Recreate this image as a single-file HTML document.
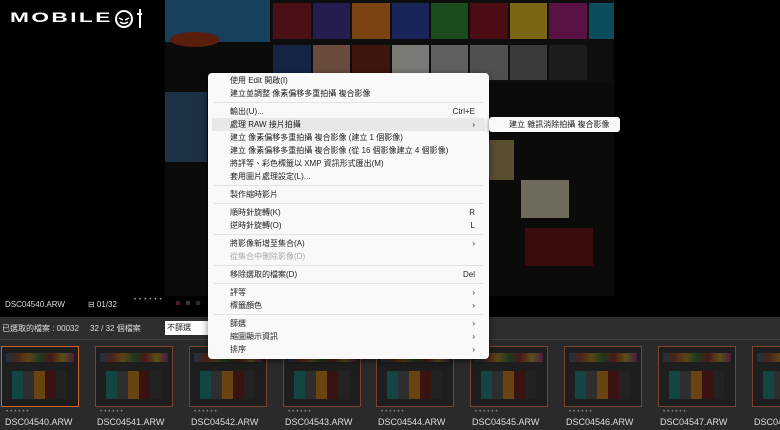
<!DOCTYPE html>
<html><head><meta charset="utf-8"><style>
*{margin:0;padding:0;box-sizing:border-box}
html,body{width:780px;height:430px;overflow:hidden}
body{background:#000;position:relative;font-family:"Liberation Sans","Noto Sans CJK TC",sans-serif;color:#ddd}
#w{position:absolute;left:0;top:0;width:780px;height:430px;overflow:hidden}
.a{position:absolute}
.menu{position:absolute;left:208px;top:73px;width:281px;height:286px;background:#f9f9f9;border-radius:4px;box-shadow:0 2px 8px rgba(0,0,0,.5);font-size:8px;color:#222}
.it{position:absolute;left:22px;height:13px;line-height:13px;white-space:nowrap}
.k{position:absolute;right:14px;height:13px;line-height:13px}
.sep{position:absolute;left:6px;right:6px;height:1px;background:#e2e2e2}
.th{position:absolute;top:346px;width:78px;height:61px;border:1px solid #7a4430;background:#1e1e1e;overflow:hidden}
.lab{position:absolute;top:417px;font-size:9px;color:#ddd;white-space:nowrap}
.dots{position:absolute;top:409px;font-size:6px;color:#888;letter-spacing:2px}
.th::before{content:"";position:absolute;left:4px;top:6px;width:68px;height:9px;background:linear-gradient(90deg,#1e3248,#4a2418,#5a4418,#1e3a1e,#4a1818,#5a5018,#4a1a40)}
.th::after{content:"";position:absolute;left:10px;top:24px;width:55px;height:28px;background:linear-gradient(90deg,#134545 0 20%,#2e2e2e 20% 40%,#6a4410 40% 60%,#3a1212 60% 80%,#222 80%)}
</style></head><body><div id="w">
<div class="a" style="left:165px;top:0;width:449px;height:296px;background:#0b0b0a"></div>
<div class="a" style="left:165px;top:0;width:105px;height:42px;background:#17405e"></div>
<div class="a" style="left:170px;top:32px;width:50px;height:15px;border-radius:50%;background:#5a1e0c"></div>
<div class="a" style="left:165px;top:92px;width:42px;height:70px;background:#1c3244"></div>
<div class="a" style="left:272px;top:0;width:342px;height:82px;background:#0e0e0e"></div>
<div class="a" style="left:273px;top:3px;width:38px;height:36px;background:#4a1016"></div>
<div class="a" style="left:313px;top:3px;width:37px;height:36px;background:#241e50"></div>
<div class="a" style="left:352px;top:3px;width:38px;height:36px;background:#7a4510"></div>
<div class="a" style="left:392px;top:3px;width:37px;height:36px;background:#1a2458"></div>
<div class="a" style="left:431px;top:3px;width:37px;height:36px;background:#1a4c1e"></div>
<div class="a" style="left:470px;top:3px;width:38px;height:36px;background:#4c0c14"></div>
<div class="a" style="left:510px;top:3px;width:37px;height:36px;background:#7a6614"></div>
<div class="a" style="left:549px;top:3px;width:38px;height:36px;background:#5a1245"></div>
<div class="a" style="left:589px;top:3px;width:25px;height:36px;background:#0c4c5c"></div>
<div class="a" style="left:273px;top:45px;width:38px;height:35px;background:#162446"></div>
<div class="a" style="left:313px;top:45px;width:37px;height:35px;background:#6a4c3e"></div>
<div class="a" style="left:352px;top:45px;width:38px;height:35px;background:#3e160e"></div>
<div class="a" style="left:392px;top:45px;width:37px;height:35px;background:#7a7a76"></div>
<div class="a" style="left:431px;top:45px;width:37px;height:35px;background:#606060"></div>
<div class="a" style="left:470px;top:45px;width:38px;height:35px;background:#505050"></div>
<div class="a" style="left:510px;top:45px;width:37px;height:35px;background:#3a3a3a"></div>
<div class="a" style="left:549px;top:45px;width:38px;height:35px;background:#1c1c1c"></div>
<div class="a" style="left:521px;top:180px;width:48px;height:38px;background:#6e6a5c"></div>
<div class="a" style="left:525px;top:228px;width:68px;height:38px;background:#3a0c0c"></div>
<div class="a" style="left:489px;top:140px;width:25px;height:40px;background:#5a4e30"></div>
<div class="a" style="left:10px;top:9px;font-size:14px;font-weight:bold;color:#fff;letter-spacing:1.5px;transform:scaleX(1.62);transform-origin:left">MOBILE</div>
<svg class="a" style="left:114px;top:6px" width="30" height="24" viewBox="0 0 30 24"><circle cx="10" cy="13" r="8" fill="none" stroke="#fff" stroke-width="2"/><path d="M5 12l4 2M15 12l-4 2M6 16q4 3 8 0" stroke="#fff" stroke-width="1.5" fill="none"/><path d="M26 3v19M23 8h5" stroke="#fff" stroke-width="2"/></svg>
<div class="a" style="left:5px;top:300px;font-size:8px;color:#ddd">DSC04540.ARW</div>
<div class="a" style="left:88px;top:300px;font-size:8px;color:#ddd">⊟ 01/32</div>
<div class="a" style="left:134px;top:297px;font-size:6px;color:#aaa;letter-spacing:3px">••••••</div>
<div class="a" style="left:176px;top:301px;width:4px;height:4px;background:#4a1a1a"></div>
<div class="a" style="left:186px;top:301px;width:4px;height:4px;background:#3a3a2a"></div>
<div class="a" style="left:196px;top:301px;width:4px;height:4px;background:#1a3a1a"></div>
<div class="a" style="left:0;top:317px;width:780px;height:22px;background:#2e2e2e"></div>
<div class="a" style="left:2px;top:323px;font-size:8px;color:#ddd">已選取的檔案 : 00032&nbsp;&nbsp;&nbsp;&nbsp;&nbsp;32 / 32 個檔案</div>
<div class="a" style="left:165px;top:321px;width:45px;height:14px;background:#fff;font-size:8px;color:#222;line-height:14px;padding-left:2px">不篩選</div>
<div class="a" style="left:0;top:339px;width:780px;height:1px;background:#444"></div>
<div class="a" style="left:0;top:340px;width:780px;height:90px;background:#2a2a2a"></div>
<div class="th" style="left:1px;border-color:#d0602a"></div><div class="th" style="left:95px"></div><div class="th" style="left:189px"></div><div class="th" style="left:283px"></div><div class="th" style="left:376px"></div><div class="th" style="left:470px"></div><div class="th" style="left:564px"></div><div class="th" style="left:658px"></div><div class="th" style="left:752px"></div>
<div class="lab" style="left:5px">DSC04540.ARW</div><div class="lab" style="left:97px">DSC04541.ARW</div><div class="lab" style="left:191px">DSC04542.ARW</div><div class="lab" style="left:285px">DSC04543.ARW</div><div class="lab" style="left:378px">DSC04544.ARW</div><div class="lab" style="left:472px">DSC04545.ARW</div><div class="lab" style="left:566px">DSC04546.ARW</div><div class="lab" style="left:660px">DSC04547.ARW</div><div class="lab" style="left:754px;width:26px;overflow:hidden">DSC04548.ARW</div>
<div class="dots" style="left:6px">••••••</div><div class="dots" style="left:100px">••••••</div><div class="dots" style="left:194px">••••••</div><div class="dots" style="left:288px">••••••</div><div class="dots" style="left:381px">••••••</div><div class="dots" style="left:475px">••••••</div><div class="dots" style="left:569px">••••••</div><div class="dots" style="left:663px">••••••</div>
<div class="menu">
<div class="it" style="top:1px">使用 Edit 開啟(I)</div>
<div class="it" style="top:14px">建立並調整 像素偏移多重拍攝 複合影像</div>
<div class="sep" style="top:29px"></div>
<div class="it" style="top:32px">輸出(U)...</div><div class="k" style="top:32px">Ctrl+E</div>
<div class="a" style="left:4px;right:4px;top:45px;height:13px;background:#e8e8e8"></div>
<div class="it" style="top:45px">處理 RAW 接片拍攝</div><div class="k" style="top:45px">›</div>
<div class="it" style="top:58px">建立 像素偏移多重拍攝 複合影像 (建立 1 個影像)</div>
<div class="it" style="top:71px">建立 像素偏移多重拍攝 複合影像 (從 16 個影像建立 4 個影像)</div>
<div class="it" style="top:84px">將評等、彩色標籤以 XMP 資訊形式匯出(M)</div>
<div class="it" style="top:97px">套用圖片處理設定(L)...</div>
<div class="sep" style="top:112px"></div>
<div class="it" style="top:115px">製作縮時影片</div>
<div class="sep" style="top:130px"></div>
<div class="it" style="top:133px">順時針旋轉(K)</div><div class="k" style="top:133px">R</div>
<div class="it" style="top:146px">逆時針旋轉(O)</div><div class="k" style="top:146px">L</div>
<div class="sep" style="top:161px"></div>
<div class="it" style="top:164px">將影像新增至集合(A)</div><div class="k" style="top:164px">›</div>
<div class="it" style="top:177px;color:#aaa">從集合中刪除影像(D)</div>
<div class="sep" style="top:192px"></div>
<div class="it" style="top:195px">移除選取的檔案(D)</div><div class="k" style="top:195px">Del</div>
<div class="sep" style="top:210px"></div>
<div class="it" style="top:213px">評等</div><div class="k" style="top:213px">›</div>
<div class="it" style="top:226px">標籤顏色</div><div class="k" style="top:226px">›</div>
<div class="sep" style="top:241px"></div>
<div class="it" style="top:244px">篩選</div><div class="k" style="top:244px">›</div>
<div class="it" style="top:257px">縮圖顯示資訊</div><div class="k" style="top:257px">›</div>
<div class="it" style="top:270px">排序</div><div class="k" style="top:270px">›</div>
</div>
<div class="a" style="left:489px;top:117px;width:131px;height:15px;background:#f9f9f9;border-radius:3px;box-shadow:0 1px 4px rgba(0,0,0,.5);font-size:8px;color:#222;line-height:15px;padding-left:20px">建立 雜訊消除拍攝 複合影像</div>
</div></body></html>
